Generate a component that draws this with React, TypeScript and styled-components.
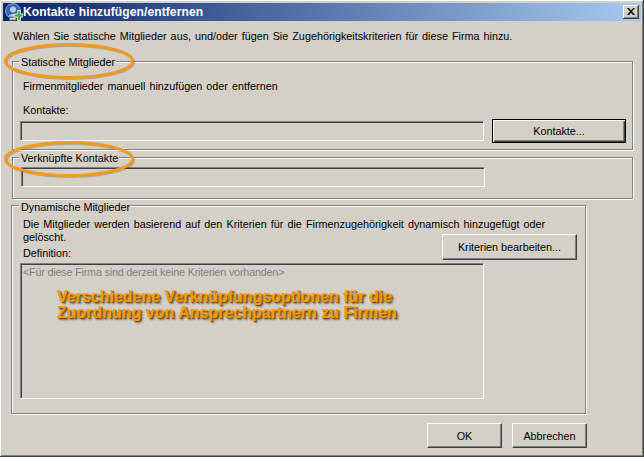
import React from "react";
import styled, { createGlobalStyle } from "styled-components";

const Global = createGlobalStyle`
  html, body { margin: 0; padding: 0; background: #d4d0c8; }
  #root { width: 644px; height: 457px; overflow: hidden; }
`;

const Window = styled.div`
  position: relative;
  box-sizing: border-box;
  width: 644px;
  height: 457px;
  display: flex;
  flex-direction: column;
  padding: 3px;
  background: #d4d0c8;
  border-right: 1px solid #404040;
  border-bottom: 1px solid #404040;
  box-shadow: inset 1px 1px 0 #ffffff, inset -1px -1px 0 #808080;
  font-family: "Liberation Sans", Arial, sans-serif;
  font-size: 10.8px;
  color: #000;
`;

const TitleBar = styled.div`
  flex: none;
  height: 18px;
  margin-right: -1px;
  display: flex;
  align-items: center;
  padding: 0 2px 0 2px;
  gap: 0;
  background: linear-gradient(90deg, #0a246a 0%, #a6caf0 100%);
`;

const TitleText = styled.div`
  flex: 1;
  color: #fff;
  font-family: "Liberation Sans", sans-serif;
  font-weight: 700;
  font-size: 12px;
  letter-spacing: 0.12px;
  white-space: nowrap;
`;

const CloseButton = styled.div`
  box-sizing: border-box;
  width: 16px;
  height: 14px;
  display: flex;
  align-items: center;
  justify-content: center;
  background: #d4d0c8;
  border-right: 1px solid #404040;
  border-bottom: 1px solid #404040;
  box-shadow: inset 1px 1px 0 #fff, inset -1px -1px 0 #808080;
`;

const Content = styled.div`
  flex: 1;
  display: flex;
  flex-direction: column;
  padding: 0 0 0 9px;
`;

const Intro = styled.div`
  margin: 8px 0 0 1px;
  height: 29px;
  line-height: 14px;
  word-spacing: 1px;
  white-space: nowrap;
`;

const Group = styled.div<{ $w: number; $h: number; $mt: number; $ml?: number }>`
  box-sizing: border-box;
  width: ${(p) => p.$w}px;
  height: ${(p) => p.$h}px;
  margin-top: ${(p) => p.$mt}px;
  margin-left: ${(p) => p.$ml ?? 0}px;
  display: flex;
  flex-direction: column;
  border: 1px solid #808080;
  box-shadow: 1px 1px 0 #fff, inset 1px 1px 0 #fff;
`;

const Legend = styled.div<{ $ml: number; $mt: number }>`
  align-self: flex-start;
  height: 14px;
  line-height: 14px;
  margin: ${(p) => p.$mt}px 0 0 ${(p) => p.$ml}px;
  padding: 0 1px 0 2px;
  background: #d4d0c8;
  white-space: nowrap;
`;

const Line = styled.div<{ $ml: number; $mt: number; $lh?: number }>`
  margin: ${(p) => p.$mt}px 0 0 ${(p) => p.$ml}px;
  line-height: ${(p) => p.$lh ?? 14}px;
  height: ${(p) => p.$lh ?? 14}px;
  white-space: nowrap;
  word-spacing: 1.1px;
`;

const Sunken = styled.div<{ $w: number; $h: number }>`
  position: relative;
  box-sizing: border-box;
  width: ${(p) => p.$w}px;
  height: ${(p) => p.$h}px;
  flex: none;
  background: #d4d0c8;
  border-style: solid;
  border-width: 1px;
  border-color: #808080 #fff #fff #808080;
  box-shadow: inset 1px 1px 0 #404040;
`;

const Row = styled.div<{ $ml: number; $mt: number; $gap: number }>`
  display: flex;
  align-items: center;
  margin: ${(p) => p.$mt}px 0 0 ${(p) => p.$ml}px;
  gap: ${(p) => p.$gap}px;
`;

const Button = styled.div<{ $w: number; $h: number; $def?: boolean }>`
  box-sizing: border-box;
  width: ${(p) => p.$w}px;
  height: ${(p) => p.$h}px;
  flex: none;
  display: flex;
  align-items: center;
  justify-content: center;
  background: #d4d0c8;
  border-style: solid;
  border-width: 1px;
  border-color: ${(p) => (p.$def ? "#000" : "#fff #404040 #404040 #fff")};
  box-shadow: ${(p) =>
    p.$def
      ? "inset 1px 1px 0 #fff, inset -1px -1px 0 #404040, inset -2px -2px 0 #808080"
      : "inset -1px -1px 0 #808080"};
  white-space: nowrap;
`;

const DynamicTop = styled.div`
  display: flex;
  flex-direction: column;
  position: relative;
`;

const CriteriaRow = styled.div`
  display: flex;
  justify-content: flex-end;
  margin: -10px 8px 0 0;
`;

const Placeholder = styled.div`
  margin: 1px 0 0 2px;
  height: 14px;
  line-height: 14px;
  color: #808080;
  white-space: nowrap;
  letter-spacing: -0.2px;
`;

const Annotation = styled.div`
  position: absolute;
  left: 36px;
  top: 25px;
  font-family: "Liberation Sans", Arial, sans-serif;
  font-weight: 700;
  font-size: 16px;
  line-height: 16px;
  color: #ff9a00;
  white-space: nowrap;
  text-shadow: 1px 1px 1px #6a4a10, 2px 2px 2px rgba(60, 40, 10, 0.6);
`;

const Footer = styled.div`
  display: flex;
  justify-content: flex-start;
  gap: 10px;
  margin: 9px 0 0 415px;
`;

const Oval = styled.svg`
  position: absolute;
  left: 0;
  top: 0;
  overflow: visible;
  pointer-events: none;
`;

const OvalAt = styled.div<{ $top: number }>`
  position: absolute;
  left: 4px;
  top: ${(p) => p.$top}px;
  width: 131px;
  height: 38px;
`;

const AppIcon = () => (
  <svg width="18" height="18" viewBox="0 0 18 18">
    <circle cx="8" cy="8" r="7.4" fill="#3e63ad" stroke="#8fb0e0" strokeWidth="1" />
    <circle cx="8" cy="6.5" r="3" fill="#b9cff0" />
    <path d="M3.5 13.5c1-3.5 8-3.5 9 0z" fill="#b9cff0" />
    <rect x="4.5" y="14.5" width="6.5" height="2.5" fill="#f0e8e0" stroke="#c04040" strokeWidth="1" />
    <path d="M12.5 7.5v3.5H9v3h3.5V17.500h3V14H18v-3h-2.500V7.500z" fill="#37b537" stroke="#fff" strokeWidth="0.8" />
  </svg>
);

const CloseIcon = () => (
  <svg width="8" height="7" viewBox="0 0 8 7">
    <path d="M0 0h2l2 2.500L6 0h2L5 3.500 8 7H6L4 4.500 2 7H0l3-3.500z" fill="#000" />
  </svg>
);

const Ellipse = () => (
  <Oval width="131" height="38" viewBox="0 0 131 38">
    <ellipse cx="66" cy="20" rx="63.500" ry="16.500" fill="none" stroke="#5b4a2a" strokeOpacity="0.3" strokeWidth="3" />
    <ellipse cx="65" cy="19" rx="63.500" ry="16.500" fill="none" stroke="#f39a1c" strokeWidth="3" />
  </Oval>
);

export default function App() {
  return (
    <>
      <Global />
      <Window>
        <TitleBar>
          <AppIcon />
          <TitleText>Kontakte hinzufügen/entfernen</TitleText>
          <CloseButton>
            <CloseIcon />
          </CloseButton>
        </TitleBar>
        <Content>
          <Intro>
            Wählen Sie statische Mitglieder aus, und/oder fügen Sie Zugehörigkeitskriterien für diese Firma hinzu.
          </Intro>
          <Group $w={621} $h={89} $mt={3}>
            <Legend $ml={6} $mt={-7}>Statische Mitglieder</Legend>
            <Line $ml={10} $mt={10}>Firmenmitglieder manuell hinzufügen oder entfernen</Line>
            <Line $ml={10} $mt={10}>Kontakte:</Line>
            <Row $ml={7} $mt={2} $gap={8}>
              <Sunken $w={464} $h={20} />
              <Button $w={134} $h={24} $def>Kontakte...</Button>
            </Row>
          </Group>
          <Group $w={621} $h={42} $mt={7}>
            <Legend $ml={6} $mt={-7}>Verknüpfte Kontakte</Legend>
            <Row $ml={8} $mt={2} $gap={0}>
              <Sunken $w={464} $h={20} />
            </Row>
          </Group>
          <Group $w={575} $h={209} $mt={6} $ml={-1}>
            <Legend $ml={7} $mt={-6}>Dynamische Mitglieder</Legend>
            <DynamicTop>
              <Line $ml={11} $mt={4} $lh={13}>
                Die Mitglieder werden basierend auf den Kriterien für die Firmenzugehörigkeit dynamisch hinzugefügt oder
              </Line>
              <Line $ml={11} $mt={0} $lh={13}>gelöscht.</Line>
              <CriteriaRow>
                <Button $w={135} $h={26}>Kriterien bearbeiten...</Button>
              </CriteriaRow>
              <Line $ml={11} $mt={-14}>Definition:</Line>
            </DynamicTop>
            <Row $ml={8} $mt={3} $gap={0}>
              <Sunken $w={464} $h={136}>
                <Placeholder>&lt;Für diese Firma sind derzeit keine Kriterien vorhanden&gt;</Placeholder>
                <Annotation>
                  Verschiedene Verknüpfungsoptionen für die
                  <br />
                  Zuordnung von Ansprechpartnern zu Firmen
                </Annotation>
              </Sunken>
            </Row>
          </Group>
          <Footer>
            <Button $w={75} $h={25}>OK</Button>
            <Button $w={75} $h={25}>Abbrechen</Button>
          </Footer>
        </Content>
        <OvalAt $top={42}><Ellipse /></OvalAt>
        <OvalAt $top={140}><Ellipse /></OvalAt>
      </Window>
    </>
  );
}
